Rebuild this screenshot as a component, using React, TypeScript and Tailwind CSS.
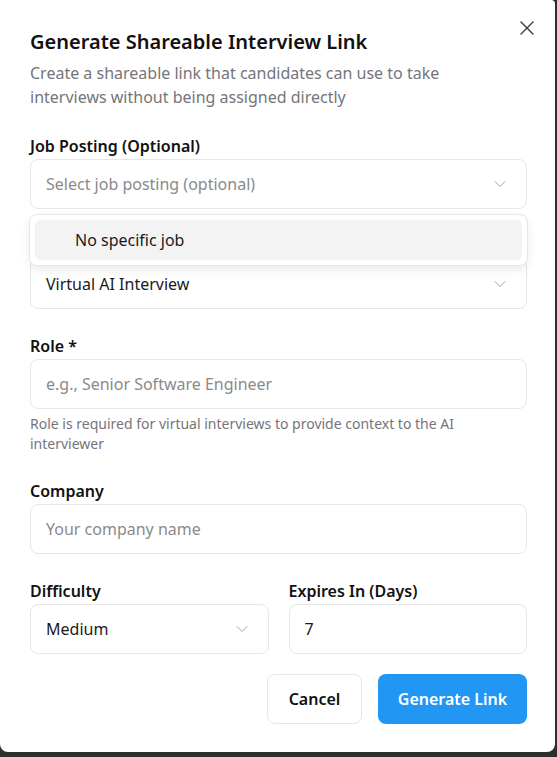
import React from "react";
import { ChevronDown, X } from "lucide-react";

const font = { fontFamily: '"Noto Sans", "Open Sans", sans-serif' };

function Label({ children }: { children: React.ReactNode }) {
  return (
    <label className="block text-[16px] leading-[25px] font-semibold text-[#111]">
      {children}
    </label>
  );
}

function SelectBox({
  value,
  placeholder,
}: {
  value?: string;
  placeholder?: string;
}) {
  return (
    <div className="h-[50px] flex items-center justify-between rounded-lg border border-[#e6e6e6] bg-white pl-[15px] pr-[16px] text-[16px]">
      <span className={value ? "text-[#1a1a1a]" : "text-[#8a8a8a]"}>
        {value || placeholder}
      </span>
      <ChevronDown className="w-[20px] h-[20px] text-[#a3a3a3]" strokeWidth={1.2} />
    </div>
  );
}

function TextBox({ value, placeholder }: { value?: string; placeholder?: string }) {
  return (
    <div className="h-[50px] flex items-center rounded-lg border border-[#e6e6e6] bg-white px-[15px] text-[16px]">
      <span className={value ? "text-[#1a1a1a]" : "text-[#8a8a8a]"}>
        {value || placeholder}
      </span>
    </div>
  );
}

export default function App() {
  return (
    <div className="w-[557px] h-[757px] bg-[#2e2e2e] overflow-hidden" style={font}>
      <div className="relative w-[555px] h-[752px] bg-white rounded-b-lg rounded-tr-sm pl-[30px] pr-[28px] pt-[28px]">
        <button className="absolute right-[16px] top-[16px] text-[#444]">
          <X className="w-[24px] h-[24px]" strokeWidth={1.5} />
        </button>

        <h2 className="text-[20px] leading-[28px] font-semibold text-[#111]">
          Generate Shareable Interview Link
        </h2>
        <p className="mt-[5px] max-w-[440px] text-[16px] leading-[24px] text-[#75757a]">
          Create a shareable link that candidates can use to take interviews without being
          assigned directly
        </p>

        <div className="mt-[25px] flex flex-col gap-[25px]">
          <div className="relative">
            <Label>Job Posting (Optional)</Label>
            <SelectBox placeholder="Select job posting (optional)" />
            <div className="absolute left-[-1px] right-[-1px] top-[80px] z-10 rounded-lg border border-[#e6e6e6] bg-white p-[5px] shadow-[0_4px_10px_rgba(0,0,0,0.08)]">
              <div className="h-[40px] flex items-center rounded-md bg-[#f3f3f3] pl-[40px] text-[16px] text-[#1a1a1a]">
                No specific job
              </div>
            </div>
          </div>

          <div>
            <Label>Interview Type</Label>
            <SelectBox value="Virtual AI Interview" />
          </div>

          <div>
            <Label>Role *</Label>
            <TextBox placeholder="e.g., Senior Software Engineer" />
            <p className="mt-[5px] text-[14px] leading-[20px] text-[#75757a]">
              Role is required for virtual interviews to provide context to the AI
              <br />
              interviewer
            </p>
          </div>

          <div>
            <Label>Company</Label>
            <TextBox placeholder="Your company name" />
          </div>

          <div className="grid grid-cols-2 gap-[20px]">
            <div>
              <Label>Difficulty</Label>
              <SelectBox value="Medium" />
            </div>
            <div>
              <Label>Expires In (Days)</Label>
              <TextBox value="7" />
            </div>
          </div>
        </div>

        <div className="mt-[20px] flex justify-end gap-[16px]">
          <button className="h-[50px] w-[95px] rounded-lg border border-[#e6e6e6] bg-white text-[16px] font-semibold text-[#111]">
            Cancel
          </button>
          <button className="h-[50px] w-[149px] rounded-lg bg-[#2196f3] text-[16px] font-semibold text-white">
            Generate Link
          </button>
        </div>
      </div>
    </div>
  );
}
